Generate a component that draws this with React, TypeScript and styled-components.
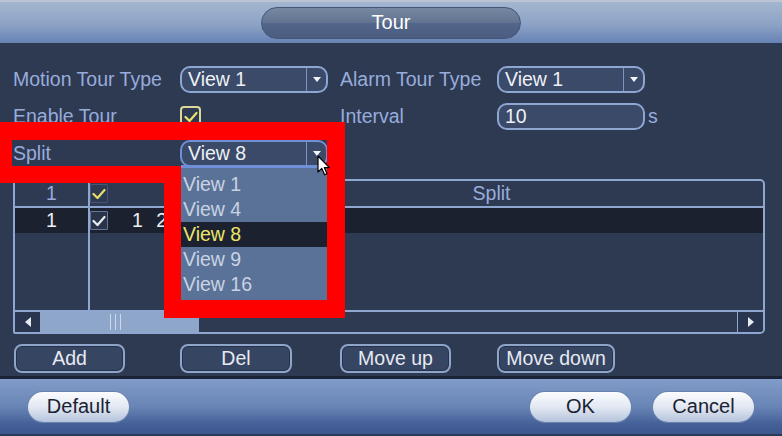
import React from 'react';
import styled, { createGlobalStyle } from 'styled-components';

const GlobalStyle = createGlobalStyle`
  html, body {
    margin: 0;
    padding: 0;
    background: #2e3a52;
  }
`;

const Page = styled.div`
  width: 782px;
  height: 436px;
  display: flex;
  flex-direction: column;
  overflow: hidden;
  font-family: 'Liberation Sans', Arial, sans-serif;
`;

const Header = styled.header`
  height: 43px;
  box-sizing: border-box;
  border-top: 2px solid #bac4d3;
  background: linear-gradient(#a4b6cf, #8da3c6 55%, #6683b4);
  display: flex;
  justify-content: center;
  align-items: center;
`;

const TitlePill = styled.div`
  width: 260px;
  height: 32px;
  box-sizing: border-box;
  border-radius: 16px;
  border: 1px solid #44577a;
  background: linear-gradient(#7788a3, #62748f 48%, #52658a 52%, #4b5e80);
  color: #fff;
  font-family: 'Liberation Sans Narrow', 'Liberation Sans', Arial, sans-serif;
  font-size: 20px;
  display: flex;
  align-items: center;
  justify-content: center;
`;

const Body = styled.main`
  position: relative;
  height: 333px;
  box-sizing: border-box;
  padding: 23px 17px 0 13px;
  background: #2e3a52;
`;

const FormGrid = styled.div`
  display: grid;
  grid-template-columns: 167px 148px 12px 157px 148px auto;
  grid-auto-rows: 27px;
  row-gap: 10px;
  align-items: center;
`;

const Label = styled.span`
  color: #98acdc;
  font-size: 19.5px;
  white-space: nowrap;
`;

const Field = styled.div<{ $open?: boolean }>`
  position: relative;
  height: 27px;
  box-sizing: border-box;
  border: 2px solid ${(p) => (p.$open ? '#6f8fd6' : '#8ea6d2')};
  border-radius: 10px;
  background: #3a4a68;
  display: flex;
  align-items: center;
  color: #eef1f6;
  font-size: 19.5px;
`;

const FieldText = styled.span`
  flex: 1;
  padding-left: 6px;
`;

const ArrowBox = styled.span`
  width: 19px;
  align-self: stretch;
  border-left: 1px solid #7d94c0;
  display: flex;
  align-items: center;
  justify-content: center;

  &::after {
    content: '';
    border-left: 4px solid transparent;
    border-right: 4px solid transparent;
    border-top: 5px solid #f2f4f8;
  }
`;

const Suffix = styled.span`
  color: #98acdc;
  font-size: 19.5px;
  padding-left: 3px;
`;

const CheckBox = styled.span<{ $tone: 'yellow' | 'white' | 'faint' }>`
  width: ${(p) => (p.$tone === 'yellow' ? '21px' : '18px')};
  height: ${(p) => (p.$tone === 'yellow' ? '21px' : '19px')};
  box-sizing: border-box;
  border: ${(p) =>
    p.$tone === 'yellow' ? '2px solid #dcd89a' : p.$tone === 'white' ? '1px solid #66769a' : '1px solid #46567a'};
  border-radius: ${(p) => (p.$tone === 'yellow' ? '4px' : '1px')};
  background: ${(p) => (p.$tone === 'white' ? '#2a3448' : 'transparent')};
  display: inline-flex;
  align-items: center;
  justify-content: center;
`;

const DropList = styled.ul`
  position: absolute;
  left: -1px;
  top: 23px;
  width: 146px;
  margin: 0;
  padding: 4px 0 4px;
  list-style: none;
  background: #5a7298;
  border-top: 3px solid #6f8fd6;
  z-index: 2;
`;

const DropItem = styled.li<{ $active?: boolean }>`
  height: 25px;
  line-height: 25px;
  padding-left: 2px;
  font-size: 19.5px;
  color: ${(p) => (p.$active ? '#ece46c' : '#c9d3e3')};
  background: ${(p) => (p.$active ? '#1b212e' : 'transparent')};
`;

const Table = styled.section`
  margin-top: 12px;
  height: 155px;
  box-sizing: border-box;
  border: 2px solid #8ea6d0;
  border-radius: 2px 5px 5px 2px;
  display: flex;
  flex-direction: column;
  overflow: hidden;
`;

const TRow = styled.div<{ $kind: 'head' | 'data' | 'fill' }>`
  display: grid;
  grid-template-columns: 75px 130px 1fr;
  height: ${(p) => (p.$kind === 'fill' ? 'auto' : '25px')};
  flex: ${(p) => (p.$kind === 'fill' ? 1 : 'none')};
  background: ${(p) => (p.$kind === 'data' ? '#1b212e' : 'transparent')};
  border-bottom: ${(p) => (p.$kind === 'head' ? '2px solid #8ea6d0' : 'none')};
`;

const TCell = styled.div<{ $sep?: boolean; $head?: boolean; $align?: string }>`
  display: flex;
  align-items: center;
  justify-content: ${(p) => p.$align || 'center'};
  border-right: ${(p) => (p.$sep ? '2px solid #8ea6d0' : 'none')};
  color: ${(p) => (p.$head ? '#98acdc' : '#eef1f6')};
  font-size: 19.5px;
  white-space: nowrap;
`;

const Channels = styled.span`
  padding-left: 24px;
  word-spacing: 8px;
`;

const ScrollBar = styled.div`
  height: 20px;
  border-top: 2px solid #8ea6d0;
  display: flex;
`;

const ScrollArrow = styled.span<{ $dir: 'left' | 'right' }>`
  width: 25px;
  display: flex;
  align-items: center;
  justify-content: center;
  background: #2a3650;
  border-left: ${(p) => (p.$dir === 'right' ? '1px solid #8ea6d0' : 'none')};

  &::after {
    content: '';
    border-top: 5px solid transparent;
    border-bottom: 5px solid transparent;
    ${(p) => (p.$dir === 'left' ? 'border-right: 6px solid #e6eaf2;' : 'border-left: 6px solid #e6eaf2;')}
  }
`;

const ScrollThumb = styled.span`
  width: 159px;
  background: #8ea6c9;
  display: flex;
  justify-content: center;
  gap: 4px;
  padding-right: 8px;
  box-sizing: border-box;

  & > i {
    width: 1px;
    margin: 2px 0;
    background: #cdd8ea;
  }
`;

const ScrollTrack = styled.span`
  flex: 1;
`;

const ButtonRow = styled.div`
  margin-top: 10px;
  display: grid;
  grid-template-columns: 166px 160px 157px auto;
  padding-left: 1px;
`;

const ActionButton = styled.button<{ $w: number }>`
  width: ${(p) => p.$w}px;
  height: 29px;
  box-sizing: border-box;
  border: 2px solid #8ea4c8;
  border-radius: 8px;
  background: #364562;
  box-shadow: inset 0 0 0 1px #26314a;
  color: #e6eaf2;
  font-family: 'Liberation Sans', Arial, sans-serif;
  font-size: 19.5px;
  padding: 0;
`;

const Footer = styled.footer`
  height: 60px;
  box-sizing: border-box;
  border-top: 3px solid #1b2336;
  border-bottom: 2px solid #2c3a58;
  background: linear-gradient(#819cc8, #6985b6 50%, #46629a 80%, #3c578c);
  display: flex;
  align-items: center;
  justify-content: space-between;
  padding: 0 28px 0 28px;
`;

const FooterGroup = styled.div`
  display: flex;
  gap: 22px;
`;

const PillButton = styled.button`
  width: 101px;
  height: 30px;
  border: none;
  border-radius: 15px;
  background: linear-gradient(#fbfcfe, #e2e8f2 50%, #b4c3dc);
  box-shadow: 0 0 0 1px #6a82ad;
  color: #1b2232;
  font-family: 'Liberation Sans Narrow', 'Liberation Sans', Arial, sans-serif;
  font-size: 20px;
  padding: 0;
`;

const Annotation = styled.svg`
  position: absolute;
  left: 0;
  top: 79px;
  z-index: 3;
`;

const Cursor = styled.svg`
  position: absolute;
  left: 317px;
  top: 112px;
  z-index: 4;
`;

const Check = ({ color }: { color: string }) => (
  <svg width="14" height="12" viewBox="0 0 14 12">
    <polyline points="1.5,6 5.5,10 12.5,2" fill="none" stroke={color} strokeWidth="2.2" strokeLinecap="round" strokeLinejoin="round" />
  </svg>
);

const Select = ({ value, open }: { value: string; open?: boolean }) => (
  <Field $open={open}>
    <FieldText>{value}</FieldText>
    <ArrowBox />
    {open && (
      <DropList>
        {['View 1', 'View 4', 'View 8', 'View 9', 'View 16'].map((v) => (
          <DropItem key={v} $active={v === value}>
            {v}
          </DropItem>
        ))}
      </DropList>
    )}
  </Field>
);

export default function App() {
  return (
    <Page>
      <GlobalStyle />
      <Header>
        <TitlePill>Tour</TitlePill>
      </Header>
      <Body>
        <FormGrid>
          <Label>Motion Tour Type</Label>
          <Select value="View 1" />
          <span />
          <Label>Alarm Tour Type</Label>
          <Select value="View 1" />
          <span />

          <Label>Enable Tour</Label>
          <div>
            <CheckBox $tone="yellow">
              <Check color="#ece46c" />
            </CheckBox>
          </div>
          <span />
          <Label>Interval</Label>
          <Field>
            <FieldText>10</FieldText>
          </Field>
          <Suffix>s</Suffix>

          <Label>Split</Label>
          <Select value="View 8" open />
        </FormGrid>

        <Table>
          <TRow $kind="head">
            <TCell $sep $head>1</TCell>
            <TCell $align="flex-start">
              <CheckBox $tone="faint">
                <Check color="#e6de6a" />
              </CheckBox>
            </TCell>
            <TCell $head>Split</TCell>
          </TRow>
          <TRow $kind="data">
            <TCell $sep>1</TCell>
            <TCell $align="flex-start">
              <CheckBox $tone="white">
                <Check color="#e8ecf4" />
              </CheckBox>
              <Channels>1 2</Channels>
            </TCell>
            <TCell />
          </TRow>
          <TRow $kind="fill">
            <TCell $sep />
            <TCell />
            <TCell />
          </TRow>
          <ScrollBar>
            <ScrollArrow $dir="left" />
            <ScrollThumb>
              <i />
              <i />
              <i />
            </ScrollThumb>
            <ScrollTrack />
            <ScrollArrow $dir="right" />
          </ScrollBar>
        </Table>

        <ButtonRow>
          <ActionButton $w={111}>Add</ActionButton>
          <ActionButton $w={112}>Del</ActionButton>
          <ActionButton $w={111}>Move up</ActionButton>
          <ActionButton $w={118}>Move down</ActionButton>
        </ButtonRow>

        <Annotation width="345" height="196" viewBox="0 0 345 196">
          <path
            fillRule="evenodd"
            fill="#ff0000"
            d="M0 0H345V196H164V61H0Z M12 18H327V178H181V44H12Z"
          />
        </Annotation>
        <Cursor width="14" height="22" viewBox="0 0 14 22">
          <path d="M1 1 L1 17 L4.8 13.4 L7.6 19.8 L10 18.8 L7.3 12.6 L12.4 12.6 Z" fill="#ffffff" stroke="#000000" strokeWidth="1.2" strokeLinejoin="round" />
        </Cursor>
      </Body>
      <Footer>
        <PillButton>Default</PillButton>
        <FooterGroup>
          <PillButton>OK</PillButton>
          <PillButton>Cancel</PillButton>
        </FooterGroup>
      </Footer>
    </Page>
  );
}
